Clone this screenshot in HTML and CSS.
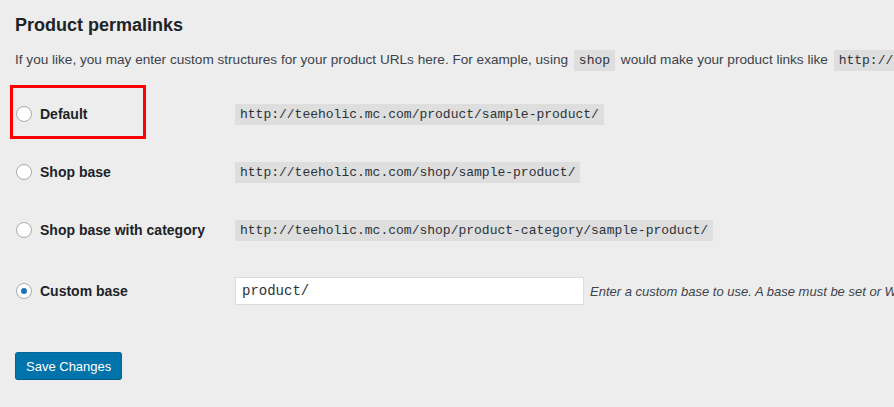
FILE: index.html
```html
<!DOCTYPE html>
<html lang="en">
<head>
    <meta charset="UTF-8">
    <meta name="viewport" content="width=device-width, initial-scale=1.0">
    <title>Permalink Settings</title>
    <link rel="stylesheet" href="styles.css">
</head>
<body>
    <div class="wrap">
        <h2 class="title">Product permalinks</h2>
        <p class="intro">If you like, you may enter custom structures for your product URLs here. For example, using <code>shop</code> would make your product links like <code>http://teeholic.mc.com/shop/sample-product/</code>. This setting affects product URLs only.</p>

        <div class="form-table">
            <div class="row highlighted">
                <label class="choice"><span class="radio"></span>Default</label>
                <div class="value"><code>http://teeholic.mc.com/product/sample-product/</code></div>
            </div>
            <div class="row">
                <label class="choice"><span class="radio"></span>Shop base</label>
                <div class="value"><code>http://teeholic.mc.com/shop/sample-product/</code></div>
            </div>
            <div class="row">
                <label class="choice"><span class="radio"></span>Shop base with category</label>
                <div class="value"><code>http://teeholic.mc.com/shop/product-category/sample-product/</code></div>
            </div>
            <div class="row custom">
                <label class="choice"><span class="radio checked"></span>Custom base</label>
                <div class="value">
                    <input class="code-input" type="text" value="product/">
                    <span class="description">Enter a custom base to use. A base must be set or WordPress will use default instead.</span>
                </div>
            </div>
        </div>

        <button class="button-primary">Save Changes</button>
    </div>
</body>
</html>
```

FILE: styles.css
```css
body {
    margin: 0;
    background: #ededed;
    color: #3c434a;
    font-family: "Liberation Sans", Arial, sans-serif;
    font-size: 14px;
    overflow: hidden;
}
.wrap {
    padding-left: 15px;
    white-space: nowrap;
}
.title {
    margin: 13px 0 0;
    font-size: 18px;
    line-height: 24px;
    font-weight: 700;
    color: #1d2327;
}
.intro {
    margin: 13px 0 0;
    font-size: 13.6px;
    line-height: 20px;
}
code {
    font-family: "Liberation Mono", monospace;
    font-size: 13px;
    background: #dedede;
    padding: 3px 5px;
    color: #2c3338;
}
.intro code {
    margin: 0 2px;
}
.form-table {
    margin-top: 14px;
}
.row {
    position: relative;
    display: flex;
    align-items: center;
    height: 58px;
}
.row.custom {
    height: 64px;
}
.choice {
    flex-shrink: 0;
    display: flex;
    align-items: center;
    width: 220px;
    font-weight: 700;
    color: #1d2327;
}
.radio {
    box-sizing: border-box;
    width: 16px;
    height: 16px;
    margin: 0 8px 0 1px;
    border: 1px solid #a7aaad;
    border-radius: 50%;
    background: #fff;
    display: flex;
    align-items: center;
    justify-content: center;
}
.radio.checked::after {
    content: "";
    width: 6px;
    height: 6px;
    border-radius: 50%;
    background: #1e73be;
}
.value {
    flex-shrink: 0;
    display: flex;
    align-items: center;
}
.highlighted::before {
    content: "";
    position: absolute;
    left: -5px;
    top: 0;
    width: 130px;
    height: 48px;
    border: 3px solid #ff0000;
}
.code-input {
    flex-shrink: 0;
    box-sizing: border-box;
    width: 349px;
    height: 28px;
    margin: 0;
    padding: 0 6px;
    border: 1px solid #dcdcde;
    background: #fff;
    font-family: "Liberation Mono", monospace;
    font-size: 14px;
    color: #2c3338;
}
.description {
    margin-left: 6px;
    font-size: 13px;
    font-style: italic;
    color: #3c434a;
}
.button-primary {
    margin-top: 29px;
    height: 28px;
    padding: 0 10px;
    border: 1px solid #006799;
    border-bottom-color: #005a87;
    border-radius: 3px;
    background: #0073aa;
    color: #fff;
    font-family: "Liberation Sans", Arial, sans-serif;
    font-size: 13px;
}
```
